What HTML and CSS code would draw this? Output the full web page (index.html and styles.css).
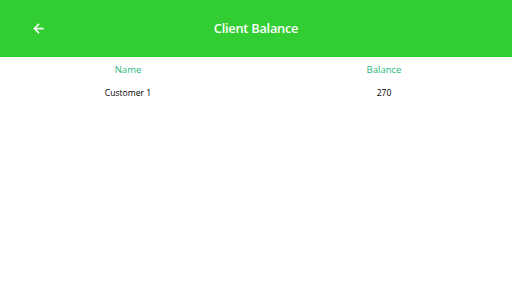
FILE: index.html
```html
<!DOCTYPE html>
<html>
<head>
<meta charset="utf-8">
<link rel="stylesheet" href="styles.css">
</head>
<body>
<header class="appbar">
  <button class="back" aria-label="Back">
    <svg width="15" height="15" viewBox="0 0 24 24"><path d="M20 11H7.83l5.59-5.59L12 4l-8 8 8 8 1.41-1.41L7.83 13H20v-2z" fill="#fff" stroke="#fff" stroke-width="0.6"/></svg>
  </button>
  <h1 class="title">Client Balance</h1>
  <span class="spacer"></span>
</header>
<table class="grid">
  <thead>
    <tr><th>Name</th><th>Balance</th></tr>
  </thead>
  <tbody>
    <tr><td>Customer 1</td><td>270</td></tr>
  </tbody>
</table>
</body>
</html>
```
FILE: styles.css
```css
html, body {
  margin: 0;
  padding: 0;
  background: #fff;
  font-family: "Open Sans", "Noto Sans", sans-serif;
}
.appbar {
  background: #32cd32;
  border-bottom: 1px solid #1fcc1f;
  box-sizing: border-box;
  height: 57px;
  display: flex;
  align-items: center;
  padding: 0 26px;
}
.back {
  background: none;
  border: 0;
  padding: 0;
  width: 24px;
  height: 24px;
  display: flex;
  align-items: center;
  justify-content: center;
}
.title {
  flex: 1;
  margin: 0;
  text-align: center;
  color: #fff;
  font-size: 12.8px;
  font-weight: 600;
  letter-spacing: -0.25px;
}
.spacer { width: 24px; }
.grid {
  width: 100%;
  border-collapse: collapse;
  table-layout: fixed;
}
.grid th, .grid td {
  text-align: center;
  padding: 0;
}
.grid th {
  color: #1fb87a;
  font-size: 9.5px;
  font-weight: 400;
  height: 24px;
}
.grid td {
  color: #000;
  font-size: 8.6px;
  height: 24px;
}
```
